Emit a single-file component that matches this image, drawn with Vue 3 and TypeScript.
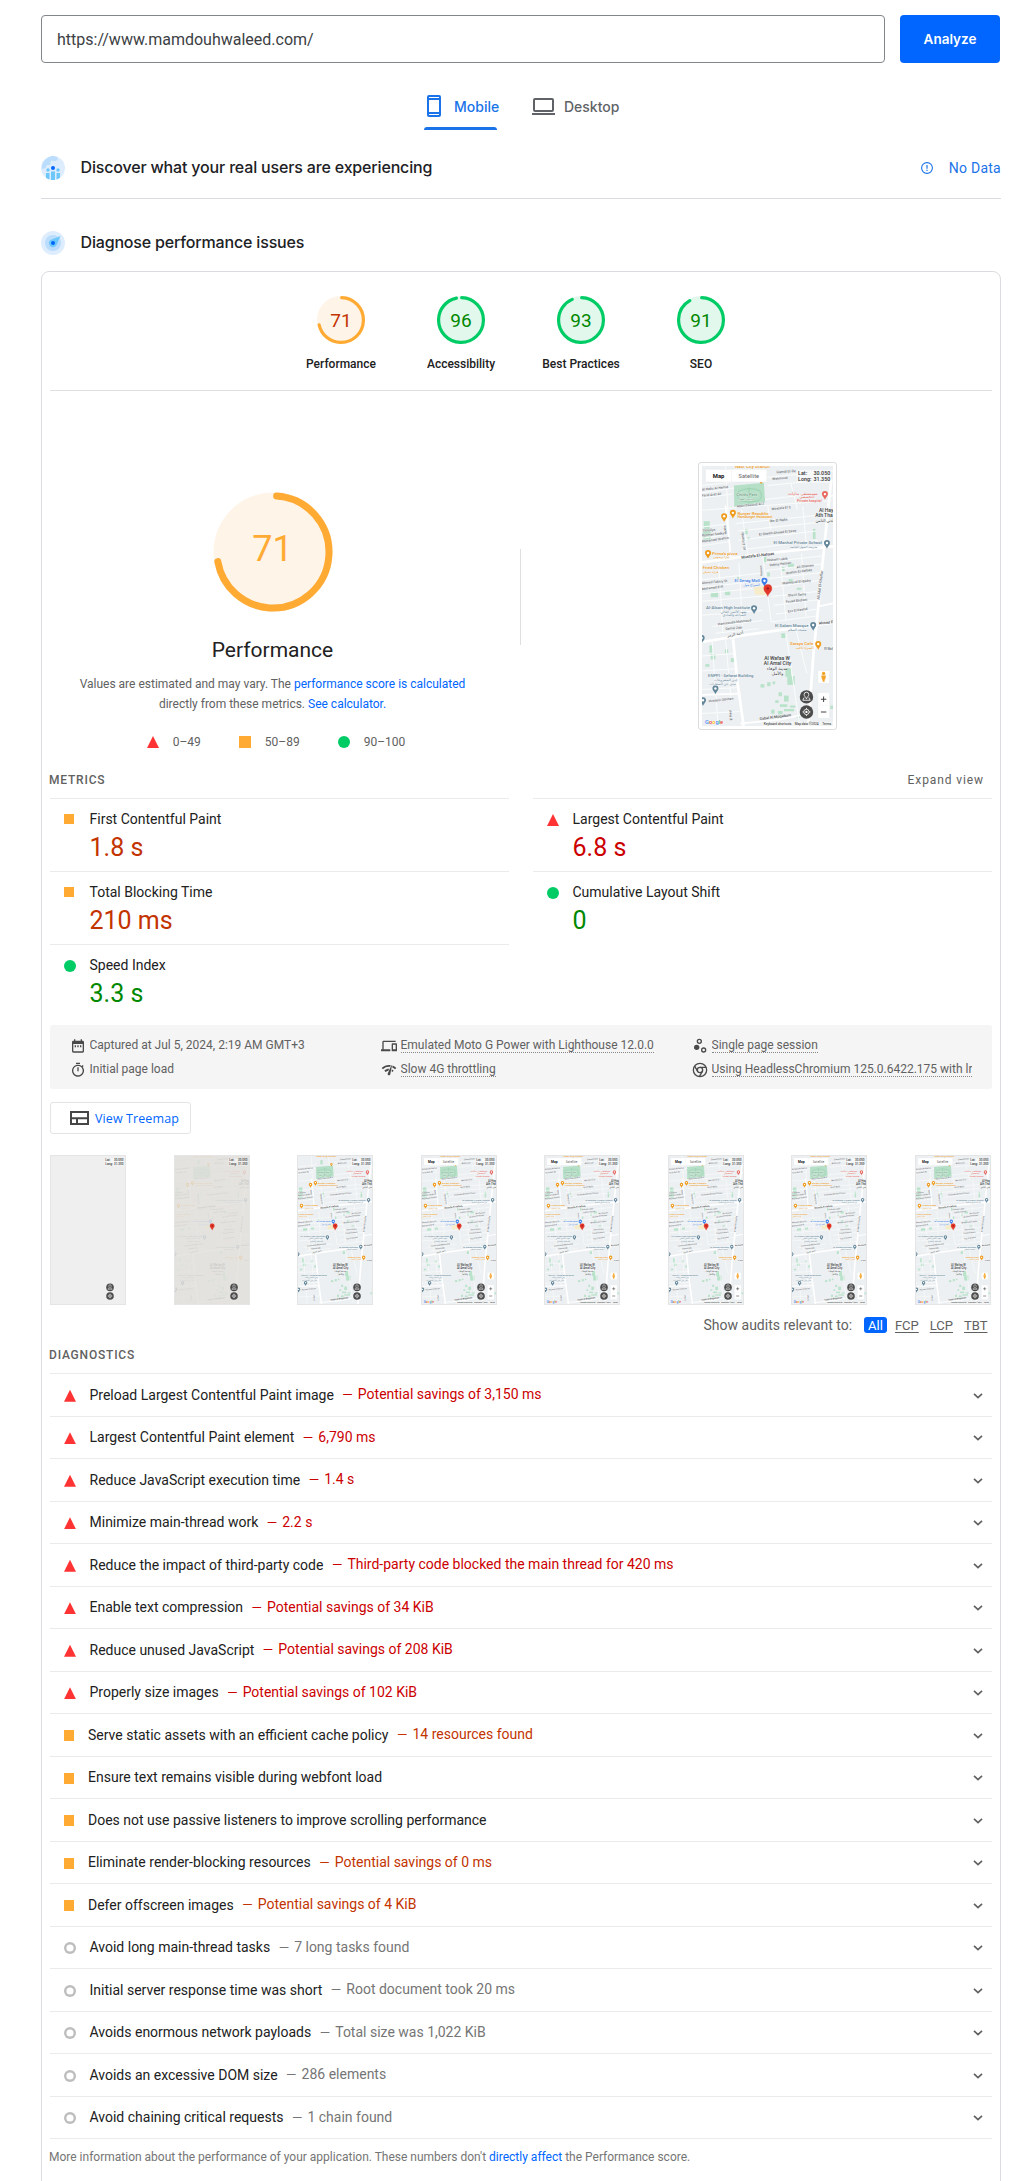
<script setup lang="ts">
type Rating = 'fail' | 'average' | 'pass' | 'info'

interface Gauge { score: number; label: string; rating: Rating }
interface Metric { label: string; value: string; rating: Rating }
interface Audit { title: string; detail?: string; rating: Rating }
interface Pin { x: number; y: number; color: string; s: number }
interface MapText { x: number; y: number; t: string; color: string; size: number; r?: number }

const gauges: Gauge[] = [
  { score: 71, label: 'Performance', rating: 'average' },
  { score: 96, label: 'Accessibility', rating: 'pass' },
  { score: 93, label: 'Best Practices', rating: 'pass' },
  { score: 91, label: 'SEO', rating: 'pass' },
]

const circumference = 2 * Math.PI * 56
const smallDash = (score: number) => `${(score / 100 - 0.005) * circumference} ${circumference}`
const bigDash = `${0.711 * circumference} ${circumference}`

const metrics: Metric[] = [
  { label: 'First Contentful Paint', value: '1.8 s', rating: 'average' },
  { label: 'Largest Contentful Paint', value: '6.8 s', rating: 'fail' },
  { label: 'Total Blocking Time', value: '210 ms', rating: 'average' },
  { label: 'Cumulative Layout Shift', value: '0', rating: 'pass' },
  { label: 'Speed Index', value: '3.3 s', rating: 'pass' },
]

const audits: Audit[] = [
  { title: 'Preload Largest Contentful Paint image', detail: 'Potential savings of 3,150 ms', rating: 'fail' },
  { title: 'Largest Contentful Paint element', detail: '6,790 ms', rating: 'fail' },
  { title: 'Reduce JavaScript execution time', detail: '1.4 s', rating: 'fail' },
  { title: 'Minimize main-thread work', detail: '2.2 s', rating: 'fail' },
  { title: 'Reduce the impact of third-party code', detail: 'Third-party code blocked the main thread for 420 ms', rating: 'fail' },
  { title: 'Enable text compression', detail: 'Potential savings of 34 KiB', rating: 'fail' },
  { title: 'Reduce unused JavaScript', detail: 'Potential savings of 208 KiB', rating: 'fail' },
  { title: 'Properly size images', detail: 'Potential savings of 102 KiB', rating: 'fail' },
  { title: 'Serve static assets with an efficient cache policy', detail: '14 resources found', rating: 'average' },
  { title: 'Ensure text remains visible during webfont load', rating: 'average' },
  { title: 'Does not use passive listeners to improve scrolling performance', rating: 'average' },
  { title: 'Eliminate render-blocking resources', detail: 'Potential savings of 0 ms', rating: 'average' },
  { title: 'Defer offscreen images', detail: 'Potential savings of 4 KiB', rating: 'average' },
  { title: 'Avoid long main-thread tasks', detail: '7 long tasks found', rating: 'info' },
  { title: 'Initial server response time was short', detail: 'Root document took 20 ms', rating: 'info' },
  { title: 'Avoids enormous network payloads', detail: 'Total size was 1,022 KiB', rating: 'info' },
  { title: 'Avoids an excessive DOM size', detail: '286 elements', rating: 'info' },
  { title: 'Avoid chaining critical requests', detail: '1 chain found', rating: 'info' },
]

const frames = ['blank', 'faded', 'tiles', 'full', 'full', 'full', 'full', 'full']

const orange = '#f09a1a'
const slate = '#64869a'
const ink = '#3c3f43'
const grey = '#6d7176'

const pins: Pin[] = [
  { x: 176, y: 44, color: orange, s: 0.7 },
  { x: 92, y: 142, color: orange, s: 1 },
  { x: 66, y: 152, color: orange, s: 1 },
  { x: 18, y: 262, color: orange, s: 1 },
  { x: 366, y: 86, color: '#e8695f', s: 1 },
  { x: 372, y: 232, color: slate, s: 1 },
  { x: 186, y: 345, color: '#3b7de8', s: 1 },
  { x: 155, y: 427, color: slate, s: 1 },
  { x: 331, y: 477, color: slate, s: 1 },
  { x: 346, y: 534, color: orange, s: 1 },
  { x: 40, y: 667, color: slate, s: 1 },
  { x: 3, y: 702, color: slate, s: 1 },
  { x: -1, y: 516, color: slate, s: 1 },
]

const labels: MapText[] = [
  { x: 98, y: 7, t: 'Nasr City branch', color: orange, size: 14 },
  { x: 106, y: 146, t: 'Burger Republic', color: orange, size: 13 },
  { x: 106, y: 156, t: 'Hamburger restaurant', color: orange, size: 10.5 },
  { x: 30, y: 265, t: "Primo's pizza", color: orange, size: 13 },
  { x: 34, y: 276, t: 'بيتزا بريموس', color: orange, size: 9 },
  { x: 2, y: 309, t: 'Fried Chicken', color: orange, size: 13 },
  { x: 2, y: 321, t: 'فرايد تشيكن', color: orange, size: 9 },
  { x: 256, y: 86, t: 'مستشفى بدايات', color: '#e8695f', size: 13 },
  { x: 290, y: 97, t: 'التخصصي', color: '#e8695f', size: 11 },
  { x: 283, y: 108, t: 'Private hospital', color: '#e8695f', size: 10.5 },
  { x: 348, y: 136, t: 'Al Hay', color: ink, size: 15 },
  { x: 337, y: 152, t: 'Ath Tha', color: ink, size: 15 },
  { x: 338, y: 167, t: 'الحي الثامن', color: ink, size: 12 },
  { x: 213, y: 234, t: 'El Manhal Private School', color: slate, size: 13 },
  { x: 262, y: 246, t: 'مدرسة المنهل الخاصة', color: slate, size: 9 },
  { x: 118, y: 277, t: 'Mustafa El-Nahaas', color: ink, size: 11.5, r: -7 },
  { x: 97, y: 348, t: 'El Serag Mall', color: '#3b7de8', size: 13 },
  { x: 123, y: 360, t: 'السراج مول', color: '#3b7de8', size: 10 },
  { x: 12, y: 426, t: 'Al-Alson High Institute', color: slate, size: 13 },
  { x: 55, y: 438, t: 'معهد الألسن العالي', color: slate, size: 10 },
  { x: 62, y: 449, t: 'للسياحة والفنادق', color: slate, size: 10 },
  { x: 217, y: 482, t: 'El Salam Mosque', color: slate, size: 13 },
  { x: 256, y: 494, t: 'مسجد السلام', color: slate, size: 10 },
  { x: 262, y: 536, t: 'Saraya Cafe', color: orange, size: 13 },
  { x: 280, y: 548, t: 'السرايا كافيه', color: orange, size: 10 },
  { x: 185, y: 579, t: 'Al Wafaa W', color: ink, size: 15 },
  { x: 184, y: 594, t: 'Al Amal City', color: ink, size: 15 },
  { x: 193, y: 609, t: 'مدينة الوفاء', color: ink, size: 13 },
  { x: 208, y: 624, t: 'والأمل', color: ink, size: 13 },
  { x: 18, y: 631, t: 'ENPPI - Sefarat Building', color: slate, size: 12.5 },
  { x: 36, y: 643, t: 'إنبي للمشروعات', color: slate, size: 10 },
  { x: 22, y: 654, t: 'مبنى حي السفارات', color: slate, size: 10 },
  { x: 222, y: 22, t: 'Gamal El-De', color: grey, size: 10.5, r: -4 },
  { x: 210, y: 42, t: 'Mahmoud', color: grey, size: 10, r: -5 },
  { x: 0, y: 74, t: 'Al Hafiz Al Hamid', color: grey, size: 10, r: -6 },
  { x: 0, y: 92, t: 'Farid Aref Ali', color: grey, size: 10, r: -6 },
  { x: 102, y: 89, t: "Child's Park", color: '#5b9b76', size: 12 },
  { x: 106, y: 103, t: 'حديقة الطفل', color: '#5b9b76', size: 9 },
  { x: 104, y: 124, t: 'Abou Dawoud Al Z', color: grey, size: 10, r: -6 },
  { x: 208, y: 132, t: 'Mostafa El S', color: grey, size: 10, r: -6 },
  { x: 202, y: 168, t: 'Ibn El Nafis', color: grey, size: 10.5, r: -5 },
  { x: 170, y: 208, t: 'El Sheikh Ahmed El Sawy', color: grey, size: 10, r: -6 },
  { x: 2, y: 196, t: 'Yaboliya', color: grey, size: 10, r: -4 },
  { x: 0, y: 211, t: 'Rahman Sedky', color: grey, size: 10, r: -6 },
  { x: 0, y: 229, t: 'Mohamed Ibrahim', color: grey, size: 10, r: -8 },
  { x: 194, y: 285, t: 'Hisham Labib', color: grey, size: 10, r: -5 },
  { x: 202, y: 300, t: 'Helmy Hassan', color: grey, size: 10, r: -7 },
  { x: 250, y: 324, t: 'Ibrahim El-Refaey', color: grey, size: 10, r: -8 },
  { x: 282, y: 306, t: 'Ali Ghanam', color: grey, size: 10, r: -7 },
  { x: 240, y: 354, t: 'Mahmoud El-Badry', color: grey, size: 10, r: -6 },
  { x: 0, y: 353, t: 'Ahmed Fakhry St', color: grey, size: 10, r: -5 },
  { x: 0, y: 371, t: 'Mohamed El K', color: grey, size: 10, r: -7 },
  { x: 256, y: 390, t: 'Sherif Samy', color: grey, size: 10, r: -4 },
  { x: 250, y: 409, t: 'Fouad Badrani', color: grey, size: 10, r: -6 },
  { x: 256, y: 438, t: 'Ezz El Rashid', color: grey, size: 10, r: -8 },
  { x: 48, y: 476, t: 'Hammouda Mahmoud', color: grey, size: 10, r: -7 },
  { x: 70, y: 490, t: 'Gamal Zaki', color: grey, size: 10, r: -5 },
  { x: 76, y: 511, t: 'أحمد الزمر', color: ink, size: 11, r: -12 },
  { x: 348, y: 474, t: 'Ahmed El', color: ink, size: 10.5, r: -6 },
  { x: 364, y: 550, t: 'El Wafa', color: grey, size: 9 },
  { x: 20, y: 706, t: 'Hussein Othman', color: grey, size: 10, r: -6 },
  { x: 172, y: 759, t: 'Gabal Al Moqattam', color: ink, size: 11, r: -7 },
  { x: 350, y: 400, t: 'Ali Abd El-Ghaffar', color: grey, size: 11, r: -83 },
  { x: 130, y: 250, t: 'Ali El Gendy', color: grey, size: 10, r: -98 },
  { x: 74, y: 204, t: 'Mekka', color: grey, size: 9, r: -98 },
  { x: 180, y: 328, t: 'Hassan', color: grey, size: 9, r: -94 },
  { x: 90, y: 760, t: 'El Nasr', color: grey, size: 10, r: -96 },
]

// Small planted plots scattered between the streets.
const plots: number[][] = [
  [118, 22, 12, 22], [5, 165, 18, 24], [2, 194, 24, 26], [330, 188, 8, 30], [128, 188, 8, 16], [136, 212, 6, 8],
  [184, 272, 8, 16], [256, 292, 18, 12], [238, 302, 8, 12], [194, 318, 8, 12], [258, 338, 12, 16], [282, 364, 14, 6],
  [26, 378, 22, 14], [68, 374, 16, 12], [104, 332, 10, 6], [236, 500, 12, 14], [22, 536, 10, 22], [26, 562, 14, 16],
  [68, 548, 10, 12], [86, 574, 10, 12], [10, 592, 12, 8], [248, 604, 18, 26], [254, 628, 22, 26], [174, 652, 12, 10],
  [194, 646, 10, 12], [210, 644, 8, 8], [228, 676, 10, 12], [244, 686, 14, 18], [218, 700, 10, 8], [232, 712, 22, 8],
  [262, 716, 16, 6], [206, 728, 10, 12], [226, 732, 14, 10], [382, 716, 10, 10], [282, 744, 10, 8], [244, 726, 30, 7],
]
</script>

<template>
  <div class="page">
    <!-- shared map artwork -->
    <svg class="defs" width="0" height="0" aria-hidden="true">
      <symbol id="map-tiles" viewBox="0 0 390 777" preserveAspectRatio="none">
        <rect width="390" height="777" fill="#edf0f2" />
        <path d="M95 58 184 50 188 108 96 122Z" fill="#b5dfc6" />
        <path d="M108 76Q140 60 172 74Q184 92 168 104Q138 112 112 104Q102 90 108 76ZM140 64V110" fill="none" stroke="#93cba9" stroke-width="2" />
        <path d="M154 362 194 358 192 386 158 384Z" fill="#f7ecc9" />
        <rect v-for="(p, i) in plots" :key="i" :x="p[0]" :y="p[1]" :width="p[2]" :height="p[3]" fill="#b9e2ca" />
        <g fill="none" stroke="#fafcfc" stroke-width="3">
          <path d="M0 58 100 46M0 80 96 66M0 96 90 84M190 34 390 14M196 58 300 48M0 132 380 104M188 100 330 84M0 182 70 174M100 172 340 148M108 194 350 168M108 222 340 194M0 216 76 204M0 238 80 226M118 250 346 222" />
          <path d="M190 288 362 268M190 312 358 292M200 336 356 318M202 362 352 342M206 390 350 374M214 416 346 400M220 442 342 428M206 466 340 448M0 340 180 320M0 362 150 346M0 382 150 366M0 404 190 388M0 446 180 432M30 480 180 462M40 500 170 486" />
          <path d="M70 0 84 264M118 130 136 266M196 120 204 190M160 0 164 50M264 50 284 130M300 120 312 250M180 262 206 466M232 270 250 460M296 262 310 450M110 290 122 500M50 290 62 500M30 520 48 777M70 520 86 690M250 500 290 770M280 490 312 620M0 568 98 560M0 612 104 606M0 668 110 662M0 740 112 734" />
        </g>
        <g fill="none" stroke="#fff" stroke-width="8">
          <path d="M0 288 200 260 392 240M0 526 120 506 392 468M92 512 106 650 124 777M385 40 364 240 350 384 332 560 316 777" />
          <path d="M0 684 114 680M114 770 230 758 316 740" stroke-width="5" />
          <path d="M378 90 392 88M346 420 392 410M70 118 86 272" stroke-width="5" />
        </g>
        <text
          v-for="(l, i) in labels" :key="i" :x="l.x" :y="l.y" :font-size="l.size" :fill="l.color"
          :transform="l.r ? `rotate(${l.r} ${l.x} ${l.y})` : undefined"
          font-family="Roboto, 'DejaVu Sans', sans-serif" font-weight="500"
          direction="ltr" stroke="#f4f6f7" stroke-width="1.5" paint-order="stroke"
        >{{ l.t }}</text>
        <g v-for="(p, i) in pins" :key="i" :transform="`translate(${p.x} ${p.y}) scale(${p.s})`">
          <path d="M0 15C-2 8-9 5-9-2A9 9 0 0 1 9-2C9 5 2 8 0 15Z" :fill="p.color" />
          <circle cy="-2" r="3.6" fill="#fff" />
        </g>
      </symbol>
      <symbol id="map-marker" viewBox="0 0 390 777" preserveAspectRatio="none">
        <path d="M196 390C194 380 184 376 184 366A12 12 0 0 1 208 366C208 376 198 380 196 390Z" fill="#e3372a" stroke="#d33025" />
        <circle cx="196" cy="366" r="4" fill="#a51a12" />
      </symbol>
      <symbol id="map-overlay" viewBox="0 0 390 777" preserveAspectRatio="none">
        <g font-family="Roboto, sans-serif" font-size="16" font-weight="500" fill="#333">
          <rect x="282" y="12" width="102" height="38" fill="#fff" opacity=".45" />
          <text x="286" y="27">Lat:</text><text x="332" y="27">30.050</text>
          <text x="286" y="45">Long:</text><text x="332" y="45">31.350</text>
        </g>
        <circle cx="311" cy="690" r="20" fill="#4b4b4b" />
        <circle cx="311" cy="735" r="20" fill="#4b4b4b" />
        <path d="M311 696C309 690 304 688 304 683A7 7 0 0 1 318 683C318 688 313 690 311 696ZM304 692 300 700H322L318 692" fill="none" stroke="#fff" stroke-width="2.5" />
        <circle cx="311" cy="735" r="8" fill="none" stroke="#fff" stroke-width="2.5" />
        <circle cx="311" cy="735" r="3.5" fill="#fff" />
        <path d="M311 723V727M311 743V747M299 735H303M319 735H323" stroke="#fff" stroke-width="2.5" />
      </symbol>
      <symbol id="map-controls" viewBox="0 0 390 777" preserveAspectRatio="none">
        <g fill="#fff" stroke="#dfe3e5" stroke-width="1">
          <rect x="10" y="10" width="183" height="38" rx="2" />
          <rect x="345" y="611" width="35" height="38" rx="2" />
          <rect x="345" y="677" width="35" height="77" rx="2" />
        </g>
        <path d="M88 11V47M350 715H375" stroke="#e6e6e6" />
        <g font-family="Roboto, sans-serif">
          <text x="32" y="35" font-size="17.5" font-weight="700" fill="#111">Map</text>
          <text x="109" y="35" font-size="17" fill="#666">Satellite</text>
          <rect x="180" y="764" width="212" height="13" fill="#f5f5f5" opacity=".7" />
          <g font-size="9.5" fill="#222">
            <text x="184" y="773">Keyboard shortcuts</text>
            <text x="276" y="773">Map data ©2024</text>
            <text x="358" y="773">Terms</text>
          </g>
          <text x="9" y="771" font-size="17" font-weight="500" fill="#4285f4" stroke="#fff" stroke-width="1" paint-order="stroke">G<tspan fill="#ea4335">o</tspan><tspan fill="#fbbc05">o</tspan>g<tspan fill="#34a853">l</tspan><tspan fill="#ea4335">e</tspan></text>
        </g>
        <circle cx="362" cy="620" r="5" fill="#f2a42b" />
        <path d="M355 626H369L367 638H365V645H359V638H357Z" fill="#f2a42b" />
        <path d="M354 697H370M362 689V705M354 735H370" stroke="#444" stroke-width="3" />
      </symbol>
    </svg>

    <form class="search" @submit.prevent>
      <div class="url">https://www.mamdouhwaleed.com/</div>
      <button class="analyze" type="submit">Analyze</button>
    </form>

    <nav class="tabs">
      <a class="tab active">
        <svg width="14" height="22" viewBox="0 0 14 22"><path fill="currentColor" fill-rule="evenodd" d="M2 0H12A2 2 0 0 1 14 2V20A2 2 0 0 1 12 22H2A2 2 0 0 1 0 20V2A2 2 0 0 1 2 0ZM2 5V17H12V5ZM2 2V3H12V2ZM2 19V20H12V19Z" /></svg>
        <span>Mobile</span>
      </a>
      <a class="tab desktop">
        <svg width="23" height="17" viewBox="0 0 23 17"><path fill="currentColor" fill-rule="evenodd" d="M3 0H20A2 2 0 0 1 22 2V12A2 2 0 0 1 20 14H3A2 2 0 0 1 1 12V2A2 2 0 0 1 3 0ZM3 2V12H20V2ZM0 15H23V17H0Z" /></svg>
        <span>Desktop</span>
      </a>
    </nav>

    <header class="section discover">
      <svg width="24" height="24" viewBox="0 0 24 24">
        <circle cx="12" cy="12" r="12" fill="#deedfe" />
        <path d="M1 10C1 7 5 1 12 0L16.500 1V4L14 5 10 4.500 9 9H6L4.500 12 1 13Z" fill="#badcfd" />
        <g fill="#6cc8fc">
          <circle cx="7" cy="14" r="1.700" /><circle cx="17" cy="14" r="1.700" />
          <path d="M5 17H8.500V23.500Q6.500 22.800 5 21.700ZM19 17H15.500V23.500Q17.500 22.800 19 21.700ZM10 15.500H14V24H10Z" />
        </g>
        <circle cx="12" cy="12" r="2" fill="#06f" />
      </svg>
      <h2>Discover what your real users are experiencing</h2>
      <span class="nodata">
        <svg width="12" height="12" viewBox="0 0 12 12"><circle cx="6" cy="6" r="5.400" fill="none" stroke="currentColor" stroke-width="1.100" /><path d="M6 3V6.700M6 7.800V9" stroke="currentColor" stroke-width="1.200" /></svg>
        <span>No Data</span>
      </span>
    </header>

    <header class="section diagnose">
      <svg width="24" height="24" viewBox="0 0 24 24">
        <circle cx="12" cy="12" r="12" fill="#deedfe" /><circle cx="12" cy="12" r="8" fill="#badcfd" />
        <path d="M19.500 5 15.500 14A4 4 0 1 1 9.500 9Z" fill="#6cc8fc" /><circle cx="12" cy="12" r="2" fill="#06f" />
      </svg>
      <h2>Diagnose performance issues</h2>
    </header>

    <main class="card">
      <div class="gauges">
        <div v-for="g in gauges" :key="g.label" class="gauge" :class="g.rating">
          <div class="dial">
            <svg width="48" height="48" viewBox="0 0 120 120">
              <circle cx="60" cy="60" r="60" class="disc" />
              <circle cx="60" cy="60" r="56" class="arc" stroke-width="8" :stroke-dasharray="smallDash(g.score)" transform="rotate(-88.2 60 60)" />
            </svg>
            <span class="score">{{ g.score }}</span>
          </div>
          <div class="name">{{ g.label }}</div>
        </div>
      </div>

      <div class="hero">
        <div class="summary">
          <div class="dial average">
            <svg width="120" height="120" viewBox="0 0 120 120">
              <circle cx="60" cy="60" r="59.500" class="disc" />
              <circle cx="60" cy="60" r="56" class="arc" stroke-width="7" :stroke-dasharray="bigDash" transform="rotate(-86.300 60 60)" />
            </svg>
            <span class="score big">71</span>
          </div>
          <h1>Performance</h1>
          <p>Values are estimated and may vary. The <a>performance score is calculated</a><br>directly from these metrics. <a>See calculator.</a></p>
          <div class="legend">
            <span><svg width="12" height="12"><path d="M6 0 12 12H0Z" fill="#f33" /></svg>0–49</span>
            <span><svg width="12" height="12"><rect width="12" height="12" fill="#fa3" /></svg>50–89</span>
            <span><svg width="12" height="12"><circle cx="6" cy="6" r="6" fill="#0c6" /></svg>90–100</span>
          </div>
        </div>
        <div class="divider"></div>
        <div class="shot">
          <svg width="131" height="260" viewBox="0 0 390 777" preserveAspectRatio="none">
            <use href="#map-tiles" /><use href="#map-marker" /><use href="#map-overlay" /><use href="#map-controls" />
          </svg>
        </div>
      </div>

      <div class="heading"><span class="caps">Metrics</span><span class="expand">Expand view</span></div>
      <div class="metrics">
        <div v-for="m in metrics" :key="m.label" class="metric" :class="m.rating">
          <i class="mark" :class="m.rating"></i>
          <div>
            <div class="mlabel">{{ m.label }}</div>
            <div class="mvalue">{{ m.value }}</div>
          </div>
        </div>
      </div>

      <div class="env">
        <div class="cell">
          <svg viewBox="0 0 24 24"><path d="M19 4h-1V2h-2v2H8V2H6v2H5c-1.110 0-1.990.9-1.990 2L3 20a2 2 0 0 0 2 2h14c1.100 0 2-.9 2-2V6c0-1.100-.9-2-2-2zm0 16H5V9h14zM7 11h2v3H7zm4 0h2v3h-2zm4 0h2v3h-2z" fill-rule="evenodd" /></svg>
          <span>Captured at Jul 5, 2024, 2:19 AM GMT+3</span>
        </div>
        <div class="cell">
          <svg viewBox="0 0 24 24"><path d="M4 6h18V4H4c-1.100 0-2 .9-2 2v11H0v3h14v-3H4V6zm19 2h-6c-.55 0-1 .45-1 1v10c0 .55.45 1 1 1h6c.55 0 1-.45 1-1V9c0-.55-.45-1-1-1zm-1 9h-4v-7h4v7z" /></svg>
          <span class="dotted">Emulated Moto G Power with Lighthouse 12.0.0</span>
        </div>
        <div class="cell">
          <svg viewBox="0 0 24 24"><circle cx="7" cy="14" r="4" /><circle cx="11" cy="5" r="3" fill="none" stroke="#4a4a4a" stroke-width="2" /><circle cx="17.500" cy="18" r="3" fill="none" stroke="#4a4a4a" stroke-width="2" /></svg>
          <span class="dotted">Single page session</span>
        </div>
        <div class="cell">
          <svg viewBox="0 0 24 24"><path d="M15 1H9v2h6V1zm-4 13h2V8h-2v6zm8.030-6.610 1.420-1.420c-.43-.51-.9-.99-1.410-1.410l-1.420 1.420A8.960 8.960 0 0 0 12 4c-4.970 0-9 4.030-9 9s4.020 9 9 9a8.990 8.990 0 0 0 7.030-14.610zM12 20c-3.870 0-7-3.130-7-7s3.130-7 7-7 7 3.130 7 7-3.130 7-7 7z" /></svg>
          <span>Initial page load</span>
        </div>
        <div class="cell">
          <svg viewBox="0 0 24 24"><path d="M15.900 5c-.17 0-.32.09-.41.23l-.07.15-5.180 11.650c-.16.29-.26.61-.26.96 0 1.110.9 2.010 2.010 2.010.96 0 1.770-.68 1.960-1.590l.01-.03L16.400 5.500c0-.28-.22-.5-.5-.5zM1 9l2 2c2.880-2.880 6.790-4.080 10.530-3.620l1.190-2.680C9.890 3.840 4.740 5.270 1 9zm20 2 2-2c-1.640-1.640-3.550-2.820-5.590-3.570l-.53 2.820c1.500.62 2.900 1.530 4.120 2.750zm-4 4 2-2c-.8-.8-1.700-1.420-2.660-1.890l-.55 2.920c.42.27.83.59 1.210.97zM5 13l2 2a7.100 7.100 0 0 1 4.030-2l1.280-2.880c-2.630-.08-5.300.87-7.310 2.880z" /></svg>
          <span class="dotted">Slow 4G throttling</span>
        </div>
        <div class="cell">
          <svg viewBox="0 0 24 24"><g fill="none" stroke="#4a4a4a" stroke-width="2"><circle cx="12" cy="12" r="10" /><circle cx="12" cy="12" r="4" /><path d="M12 8H21M8.500 14 4 6.200M15.500 14 11 22" /></g></svg>
          <span class="dotted">Using HeadlessChromium 125.0.6422.175 with lr</span>
        </div>
      </div>

      <button class="treemap" type="button">
        <svg width="19" height="14" viewBox="0 0 19 14"><path d="M1 1H18V13H1ZM1 7.300H18M7 7.300V13" fill="none" stroke="#454545" stroke-width="2" /></svg>
        <span>View Treemap</span>
      </button>

      <div class="film">
        <div v-for="(f, i) in frames" :key="i" class="frame">
          <svg width="74" height="148" viewBox="0 0 390 777" preserveAspectRatio="none">
            <rect v-if="f === 'faded'" width="390" height="777" fill="#e2e0dc" />
            <use v-if="f !== 'blank'" href="#map-tiles" :opacity="f === 'faded' ? 0.17 : 1" />
            <use v-if="f !== 'blank'" href="#map-marker" />
            <use href="#map-overlay" />
            <use v-if="f === 'full'" href="#map-controls" />
          </svg>
        </div>
      </div>

      <div class="filter">
        <span class="ftext">Show audits relevant to:</span>
        <span class="chip">All</span><a>FCP</a><a>LCP</a><a>TBT</a>
      </div>

      <div class="heading diag"><span class="caps">Diagnostics</span></div>
      <div class="audits">
        <div v-for="a in audits" :key="a.title" class="audit" :class="a.rating">
          <i class="mark" :class="a.rating"></i>
          <span class="title">{{ a.title }}</span>
          <span v-if="a.detail" class="detail"><span class="dash">—</span>{{ a.detail }}</span>
          <svg class="chev" width="10" height="6" viewBox="0 0 10 6"><path d="M1 .8 5 4.600 9 .8" fill="none" stroke="#616161" stroke-width="1.700" /></svg>
        </div>
      </div>
      <p class="more">More information about the performance of your application. These numbers don't <a>directly affect</a> the Performance score.</p>
    </main>
  </div>
</template>

<style>
body { background: #fff; }
</style>

<style scoped>
.page { box-sizing: border-box; width: 1035px; height: 2181px; overflow: hidden; padding: 15px 34px 0 41px; font-family: Roboto, sans-serif; color: #212121; position: relative; }
.page *, .page *::before { box-sizing: border-box; }
.defs { position: absolute; }
svg { display: block; flex: none; }
h1, h2, p { margin: 0; font-weight: 400; }
a { color: #06f; }
button { font: inherit; cursor: pointer; }

.search { display: flex; gap: 15px; height: 48px; width: 959px; }
.url { flex: 1; border: 1px solid #80868b; border-radius: 4px; padding: 0 15px; line-height: 47px; font-size: 16px; color: #3c4043; }
.analyze { width: 100px; border: 0; border-radius: 4px; background: #06f; color: #fff; font-family: Inter, sans-serif; font-size: 13.5px; font-weight: 600; padding: 0; }

.tabs { display: flex; margin-top: 19px; height: 48px; padding-left: 383px; font-family: Inter, sans-serif; font-size: 14px; font-weight: 500; }
.tab { display: flex; align-items: center; color: #5f6368; position: relative; }
.tab.active { width: 73px; padding-left: 3px; gap: 13px; color: #1a73e8; }
.tab.active::after { content: ''; position: absolute; left: 0; bottom: 0; width: 73px; height: 3px; background: #1a73e8; border-radius: 3px 3px 0 0; }
.tab.desktop { margin-left: 35px; gap: 9px; }

.section { display: flex; align-items: center; gap: 15.500px; width: 960px; }
.section h2 { font-family: Inter, sans-serif; font-size: 16px; font-weight: 500; letter-spacing: -.17px; padding-bottom: 2px; color: #202124; }
.discover { height: 61px; margin-top: 8px; border-bottom: 1px solid #dadce0; }
.diagnose { height: 56px; margin-top: 16px; }
.nodata { display: flex; align-items: center; gap: 16px; margin-left: auto; color: #1a73e8; font-size: 14px; letter-spacing: .25px; }

.card { width: 960px; height: 1930px; border: 1px solid #dadce0; border-radius: 8px; padding: 0 8px; }
.gauges { display: flex; justify-content: center; height: 119px; padding-top: 24px; border-bottom: 1px solid #e0e0e0; }
.gauge { width: 120px; display: flex; flex-direction: column; align-items: center; }
.dial { position: relative; }
.disc { fill: #fff4e8; }
.arc { fill: none; stroke: #fa3; stroke-linecap: round; }
.pass .disc { fill: #e3f8ed; }
.pass .arc { stroke: #0c6; }
.score { position: absolute; inset: 0; display: flex; align-items: center; justify-content: center; font-size: 19px; color: #c33300; }
.pass .score { color: #080; }
.score.big { font-size: 36px; color: #fa3; padding-bottom: 6px; }
.name { margin-top: 11px; font-size: 12px; line-height: 18px; font-weight: 500; color: #212121; }

.hero { display: flex; height: 370px; }
.summary { width: 445px; padding-top: 101px; display: flex; flex-direction: column; align-items: center; }
.summary h1 { margin-top: 25px; font-size: 21px; line-height: 26px; }
.summary p { margin-top: 11px; font-size: 12px; line-height: 20px; color: #616161; text-align: center; }
.legend { display: flex; margin-top: 16px; padding-left: 7px; gap: 38px; font-size: 12px; line-height: 24px; color: #616161; }
.legend span { display: flex; align-items: center; gap: 14px; }
.divider { width: 1px; height: 96px; margin: 158px 0 0 25px; background: #e0e0e0; }
.shot { width: 139px; height: 268px; margin: 71px 0 0 177px; padding: 3px; border: 1px solid #dcdcdc; border-radius: 3px; background: #fff; }

.heading { display: flex; justify-content: space-between; align-items: center; height: 37px; margin-left: -1px; padding-right: 8px; font-size: 12px; color: #616161; }
.caps { text-transform: uppercase; font-weight: 500; letter-spacing: .8px; }
.expand { letter-spacing: .9px; }
.metrics { display: grid; grid-template-columns: 459px 459px; column-gap: 24px; }
.metric { display: flex; height: 73px; padding: 11px 0 0 14px; border-top: 1px solid #ebebeb; color: #c33300; }
.metric.fail { color: #c00; }
.metric.pass { color: #080; }
.metric > div { width: 300px; }
.mark { display: block; flex: none; width: 12px; height: 12px; margin-right: 13.500px; }
.mark.fail { background: #f33; clip-path: polygon(50% 0, 100% 100%, 0 100%); }
.mark.average { width: 10px; height: 10px; background: #fa3; margin-right: 14px; }
.mark.pass { border-radius: 50%; background: #0c6; }
.mark.info { box-shadow: inset 0 0 0 2.400px #bdbdbd; border-radius: 50%; }
.metric .mark { margin-top: 4px; }
.metric .mark.average { margin-right: 15.500px; }
.mlabel { font-size: 14px; line-height: 18px; color: #212121; }
.mvalue { font-size: 25px; line-height: 32px; margin-top: 4px; }

.env { display: grid; grid-template-columns: 311px 311px 280px; grid-auto-rows: 24px; height: 64px; margin-top: 8px; padding: 9px 20px; border-radius: 3px; background: #f5f5f5; font-size: 12px; color: #616161; }
.cell { display: flex; align-items: center; gap: 3.500px; min-width: 0; white-space: nowrap; }
.cell svg { width: 16px; height: 16px; fill: #4a4a4a; }
.cell span { line-height: 14px; overflow: hidden; margin-bottom: 2px; }
.cell .dotted { margin-bottom: 1px; border-bottom: 1px dotted #888; }

.treemap { display: flex; align-items: center; gap: 6px; width: 141px; height: 32px; margin-top: 13px; padding: 0 0 0 19px; border: 1px solid #e4e4e4; border-radius: 3px; background: #fff; color: #06f; font-family: 'Open Sans', sans-serif; font-size: 12.5px; font-weight: 500; letter-spacing: .1px; white-space: nowrap; }
.film { display: flex; justify-content: space-between; margin-top: 21px; padding-right: 1.500px; height: 150px; }
.frame { width: 76px; height: 150px; border: 1px solid #e5e5e5; background: #efefef; }

.filter { display: flex; align-items: center; justify-content: flex-end; height: 24px; margin-top: 8px; padding-right: 4.500px; font-size: 14px; color: #616161; }
.chip { height: 16px; margin: 0 8px 0 12px; padding: 0 4px; border-radius: 3px; background: #06f; color: #fff; font-size: 13px; line-height: 17px; }
.filter a { color: #616161; font-size: 13px; text-decoration: underline; text-underline-offset: 2px; }
.filter a + a { margin-left: 11px; }
.heading.diag { height: 36px; }
.audits { border-bottom: 1px solid #ebebeb; }
.audit { display: flex; align-items: center; height: 42.500px; padding: 2px 9px 0 14px; border-top: 1px solid #ebebeb; font-size: 14px; }
.audit .mark.average { height: 11px; }
.title, .detail { padding-bottom: 2.500px; line-height: 16px; }
.detail { margin-left: 8.500px; color: #c33300; }
.dash { display: inline-block; width: 15.500px; font-size: 13.300px; }
.fail .detail { color: #c00; }
.info .detail { color: #757575; }
.chev { margin-left: auto; }
.more { margin: 8px 0 0 -1px; font-size: 12px; line-height: 20px; color: #757575; }
</style>
